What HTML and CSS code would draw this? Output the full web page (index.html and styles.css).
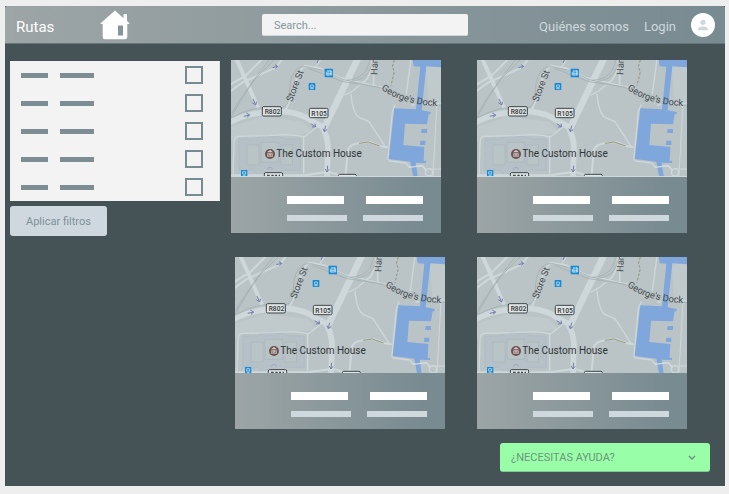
FILE: index.html
```html
<!DOCTYPE html>
<html lang="es">
<head>
<meta charset="utf-8">
<meta name="viewport" content="width=device-width, initial-scale=1">
<title>Rutas</title>
<link rel="stylesheet" href="styles.css">
</head>
<body>
<svg class="defs" aria-hidden="true">
  <symbol id="map" viewBox="18 15 630 348">
    <rect x="18" y="15" width="630" height="348" fill="#bac4c7"/>
    <g fill="#c0cacc">
      <path d="M18 215L110 185 235 200 262 232 205 240 45 244 18 262Z"/>
      <path d="M600 15H648V150L610 140Z"/>
    </g>
    <path d="M42 252H85L105 244H160L182 252H226V346H170L155 360H100L85 346H42Z" fill="#b6c0c7" stroke="#aeb8c2" stroke-width="2"/>
    <g fill="#b9c4c7" stroke="#aab5bd" stroke-width="2">
      <rect x="66" y="270" width="36" height="60"/>
      <rect x="168" y="270" width="34" height="60"/>
      <path d="M108 262H160V322H108Z"/>
      <path d="M128 344A7 7 0 0 1 142 344" fill="none" stroke="#929fbb"/>
    </g>
    <g fill="none" stroke="#ced7da" stroke-linecap="round" stroke-linejoin="round">
      <path d="M14 110L52 82L152 38L172 12M14 90L62 62L112 12" stroke-width="6"/>
      <path d="M34 12L64 78L98 156" stroke-width="12"/>
      <path d="M12 204C60 175 125 168 182 170Q232 176 260 198" stroke-width="17"/>
      <path d="M255 195L290 214Q308 242 309 280L306 366" stroke-width="17"/>
      <path d="M398 12L360 90L300 214" stroke-width="20"/>
      <path d="M184 160L200 124L220 52L240 32L286 40L344 68L460 96" stroke-width="6"/>
      <path d="M288 12L272 36M360 120L380 110L408 88L470 96M378 118Q384 178 404 188L432 200L480 274" stroke-width="4"/>
      <path d="M408 84Q435 80 442 15M446 12V88" stroke-width="5"/>
      <path d="M276 216L238 246Q205 236 132 242L38 244Q28 246 27 264L24 363M236 244V355" stroke-width="4"/>
      <path d="M18 361H238L310 350L352 363M362 356L368 290Q370 268 404 264L436 261L464 273L486 277" stroke-width="6"/>
      <path d="M558 12L544 116M510 150L502 170L489 312L494 318L542 324L552 336L592 332L604 346M560 150L648 146" stroke-width="4"/>
      <path d="M636 146L624 362M612 342H648" stroke-width="3"/>
      <circle cx="612" cy="352" r="11" stroke-width="4"/>
    </g>
    <g fill="none" stroke="#9faaad" stroke-width="2">
      <path d="M16 190Q54 122 90 72L150 12M20 175Q60 105 135 12"/>
      <path d="M16 190Q90 148 160 158Q184 160 190 138L196 80Q206 34 242 34L300 48L356 74L470 100"/>
      <path d="M250 40L354 80L464 97M364 76Q405 74 424 46L436 12M380 78Q415 76 432 50L445 16M570 150L648 151"/>
    </g>
    <path d="M508 15L502 35L508 50L498 92" fill="none" stroke="#92926f" stroke-width="3" stroke-dasharray="8 5"/>
    <path d="M402 265L430 261L464 273" fill="none" stroke="#96987b" stroke-width="3"/>
    <g fill="#7fa7dc">
      <path d="M563 15H648V37L604 34L590 166L618 171L616 178H611L606 208L540 206L535 270L598 276L596 318L603 317V324L572 323L578 363H564L556 320L491 312L508 160L573 163L586 35L566 34Z"/>
      <path d="M590 222H606V234H588ZM586 257H601V270H585Z"/>
    </g>
    <path d="M552 337L592 332L604 346" fill="none" stroke="#d3dcdf" stroke-width="4"/>
    <g fill="none" stroke="#7480ad" stroke-width="3">
      <path d="M142 38L158 34M150 29L158 34L151 40M84 132L92 150M82 143L92 150L95 140M56 184L74 180M64 174L74 180L66 187M257 206L272 215M261 216L272 215L270 206M302 212L298 230M294 221L298 230L306 224M308 332L306 351M301 342L306 351L312 343M276 24L280 15"/>
    </g>
    <g fill="#1689d2">
      <rect x="299" y="41" width="25" height="26" rx="2"/>
      <rect x="251" y="84" width="20" height="21" rx="2"/>
      <rect x="48" y="345" width="19" height="19" rx="2"/>
    </g>
    <g fill="none" stroke="#e2f0f8" stroke-width="2">
      <path d="M306 48H320V60H304V50M304 55H320M309 46V62M316 45V60"/>
      <path d="M257 90H265V98H257ZM256 101H266M53 350H62V357H53ZM53 361H62"/>
    </g>
    <g fill="#dfe4e5" stroke="#3f4648" stroke-width="3">
      <rect x="112" y="155" width="57" height="28" rx="4"/>
      <rect x="253" y="160" width="56" height="28" rx="4"/>
      <rect x="118" y="353" width="55" height="28" rx="4"/>
      <rect x="340" y="358" width="54" height="28" rx="4"/>
    </g>
    <path d="M126 361H134M139 361H146M150 361H156M161 361H165" stroke="#3f4648" stroke-width="4"/>
    <circle cx="135" cy="297" r="15" fill="#6d514d"/>
    <path d="M126 292L135 285L144 292ZM127 295H143V305H127Z" fill="#d7cfcd"/>
    <path d="M131 296V304M135 299V304M139 296V304" stroke="#6d514d" stroke-width="2"/>
  </symbol>
  <defs>
    <path id="dock" d="M468 103Q535 151 646 153"/>
  </defs>
</svg>

<div class="app">
  <header class="topbar">
    <a class="brand" href="#">Rutas</a>
    <a class="home" href="#" aria-label="Inicio">
      <svg viewBox="0 0 30 30" width="30" height="30">
        <path d="M15 0.5L23.5 8.2V5Q23.5 4 24.5 4H26Q27 4 27 5V11L29.4 13.3V14H27.3V27Q27.3 29.3 25 29.3H4.8Q2.7 29.3 2.7 27V14H.6V13.3Z" fill="#fff"/>
        <rect x="18" y="15.5" width="5" height="10" fill="#85959a"/>
      </svg>
    </a>
    <input class="search" type="search" placeholder="Search..." aria-label="Search">
    <nav class="nav">
      <a class="link" href="#">Quiénes somos</a>
      <a class="link" href="#">Login</a>
      <a class="avatar" href="#" aria-label="Perfil">
        <svg viewBox="0 0 24 24" width="24" height="24">
          <circle cx="12" cy="12" r="12" fill="#fff"/>
          <circle cx="12" cy="9.3" r="2.6" fill="#cdd8de"/>
          <path d="M7 17.3V16Q7 13.4 12 13.4T17 16V17.3Z" fill="#cdd8de"/>
        </svg>
      </a>
    </nav>
  </header>

  <main class="main">
    <form class="sidebar">
      <div class="filters">
        <label class="filter"><span class="word short"></span><span class="word"></span><input type="checkbox" aria-label="Filtro 1"></label>
        <label class="filter"><span class="word short"></span><span class="word"></span><input type="checkbox" aria-label="Filtro 2"></label>
        <label class="filter"><span class="word short"></span><span class="word"></span><input type="checkbox" aria-label="Filtro 3"></label>
        <label class="filter"><span class="word short"></span><span class="word"></span><input type="checkbox" aria-label="Filtro 4"></label>
        <label class="filter"><span class="word short"></span><span class="word"></span><input type="checkbox" aria-label="Filtro 5"></label>
      </div>
      <button class="apply" type="button">Aplicar filtros</button>
    </form>

    <div class="content">
      <section class="routes">
        <article class="card lined">
          <svg class="map" viewBox="18 15 630 348">
            <use href="#map" x="18" y="15" width="630" height="348"/>
            <text class="place" x="154" y="306">The Custom House</text>
            <text class="road" x="119" y="177">R802</text>
            <text class="road" x="259" y="182">R105</text>
            <text class="street" transform="translate(201 142) rotate(-69)">Store St</text>
            <text class="street" transform="translate(457 60) rotate(-88)">Han</text>
            <text class="street"><textPath href="#dock">George's Dock</textPath></text>
          </svg>
          <div class="info">
            <div class="line title"><span></span><span></span></div>
            <div class="line detail"><span></span><span></span></div>
          </div>
        </article>
        <article class="card lined">
          <svg class="map" viewBox="18 15 630 348">
            <use href="#map" x="18" y="15" width="630" height="348"/>
            <text class="place" x="154" y="306">The Custom House</text>
            <text class="road" x="119" y="177">R802</text>
            <text class="road" x="259" y="182">R105</text>
            <text class="street" transform="translate(201 142) rotate(-69)">Store St</text>
            <text class="street" transform="translate(457 60) rotate(-88)">Han</text>
            <text class="street"><textPath href="#dock">George's Dock</textPath></text>
          </svg>
          <div class="info">
            <div class="line title"><span></span><span></span></div>
            <div class="line detail"><span></span><span></span></div>
          </div>
        </article>
      </section>
      <section class="routes indented">
        <article class="card">
          <svg class="map" viewBox="18 15 630 348">
            <use href="#map" x="18" y="15" width="630" height="348"/>
            <text class="place" x="154" y="306">The Custom House</text>
            <text class="road" x="119" y="177">R802</text>
            <text class="road" x="259" y="182">R105</text>
            <text class="street" transform="translate(201 142) rotate(-69)">Store St</text>
            <text class="street" transform="translate(457 60) rotate(-88)">Han</text>
            <text class="street"><textPath href="#dock">George's Dock</textPath></text>
          </svg>
          <div class="info">
            <div class="line title"><span></span><span></span></div>
            <div class="line detail"><span></span><span></span></div>
          </div>
        </article>
        <article class="card">
          <svg class="map" viewBox="18 15 630 348">
            <use href="#map" x="18" y="15" width="630" height="348"/>
            <text class="place" x="154" y="306">The Custom House</text>
            <text class="road" x="119" y="177">R802</text>
            <text class="road" x="259" y="182">R105</text>
            <text class="street" transform="translate(201 142) rotate(-69)">Store St</text>
            <text class="street" transform="translate(457 60) rotate(-88)">Han</text>
            <text class="street"><textPath href="#dock">George's Dock</textPath></text>
          </svg>
          <div class="info">
            <div class="line title"><span></span><span></span></div>
            <div class="line detail"><span></span><span></span></div>
          </div>
        </article>
      </section>
    </div>
  </main>

  <footer class="help">
    <div class="help-box">
      <select aria-label="Ayuda"><option>¿NECESITAS AYUDA?</option></select>
      <svg class="chevron" viewBox="0 0 8 6" width="8" height="6"><path d="M1 1L4 4L7 1" fill="none" stroke="#6f8d83" stroke-width="1.4"/></svg>
    </div>
  </footer>
</div>
</body>
</html>
```
FILE: styles.css
```css
* {
  box-sizing: border-box;
}

body {
  margin: 0;
  padding: 6px 4px 8px 5px;
  background: #eee;
  font-family: Roboto, sans-serif;
  font-size: 11px;
}

a {
  color: inherit;
  text-decoration: none;
}

.defs {
  position: absolute;
  width: 0;
  height: 0;
}

.app {
  background: #455256;
}

.topbar {
  display: flex;
  align-items: center;
  height: 38px;
  padding: 0 10px 0 11px;
  border-bottom: 1px solid #64777c;
  border-radius: 2px 2px 0 0;
  background: linear-gradient(90deg, #9da5a6, #788b91);
}

.brand {
  width: 84px;
  padding-top: 4px;
  color: #fff;
  font-size: 15px;
  line-height: 20px;
}

.home,
.avatar {
  display: flex;
}

.search {
  width: 206px;
  height: 22px;
  margin: 0 16px 0 132px;
  padding: 2px 12px 0;
  border: 0;
  border-bottom: 1px solid #cfd8dc;
  border-radius: 2px;
  background: #f3f3f3;
  font: 11px Roboto, sans-serif;
}

.search::placeholder {
  color: #85979d;
}

.nav {
  display: flex;
  align-items: center;
  gap: 15px;
  margin-left: auto;
  color: #cfd8dc;
  font-size: 13px;
  line-height: 20px;
  white-space: nowrap;
}

.link {
  padding-top: 4px;
}

.main {
  display: flex;
  align-items: flex-start;
  gap: 11px;
  padding: 16px 38px 14px 5px;
}

.sidebar {
  width: 210px;
  padding-top: 1px;
}

.filters {
  border-right: 1px solid #dfe2e3;
  background: #f3f3f3;
}

.filter {
  display: flex;
  align-items: center;
  gap: 12px;
  height: 28px;
  padding: 0 16px 0 11px;
}

.word {
  width: 34px;
  height: 5px;
  background: #7c8d94;
}

.short {
  width: 27px;
}

.filter input {
  appearance: none;
  width: 18px;
  height: 18px;
  margin: 0 0 0 auto;
  border: 2px solid #788b91;
}

.apply {
  height: 30px;
  margin-top: 5px;
  padding: 0 16px;
  border: 0;
  border-radius: 3px;
  background: #cfd8df;
  color: #7d9197;
  font: 11px Roboto, sans-serif;
}

.content {
  flex: 1;
}

.routes {
  display: flex;
  gap: 36px;
}

.indented {
  gap: 32px;
  margin-top: 24px;
  padding-left: 4px;
}

.card {
  flex: 1;
}

.map {
  display: block;
  width: 100%;
}

.lined .info {
  border-top: 1px solid #cfd8dc;
}

.info {
  padding: 19px 18px 12px 56px;
  background: linear-gradient(90deg, #9da5a6, #788b91 90%);
}

.line {
  display: flex;
  justify-content: space-between;
}

.title {
  margin-bottom: 11px;
}

.title span {
  width: 57px;
  height: 8px;
  background: #fff;
}

.detail span {
  width: 60px;
  height: 6px;
  background: #cfd8dc;
}

.place,
.road,
.street {
  fill: #2f3435;
  font-family: Roboto, sans-serif;
}

.place {
  font-size: 30px;
}

.road {
  font-size: 20px;
  font-weight: 500;
}

.street {
  fill: #454c4e;
  font-size: 28px;
}

.help {
  display: flex;
  justify-content: flex-end;
  padding: 0 15px 14px;
}

.help-box {
  position: relative;
  width: 210px;
}

.help select {
  display: block;
  appearance: none;
  width: 100%;
  height: 29px;
  padding: 1px 11px 0;
  border: 0;
  border-bottom: 1px solid #82c893;
  border-radius: 3px;
  background: #98ffa8;
  color: #6f9480;
  font: 11px Roboto, sans-serif;
}

.chevron {
  position: absolute;
  top: 12px;
  right: 14px;
  pointer-events: none;
}
```
